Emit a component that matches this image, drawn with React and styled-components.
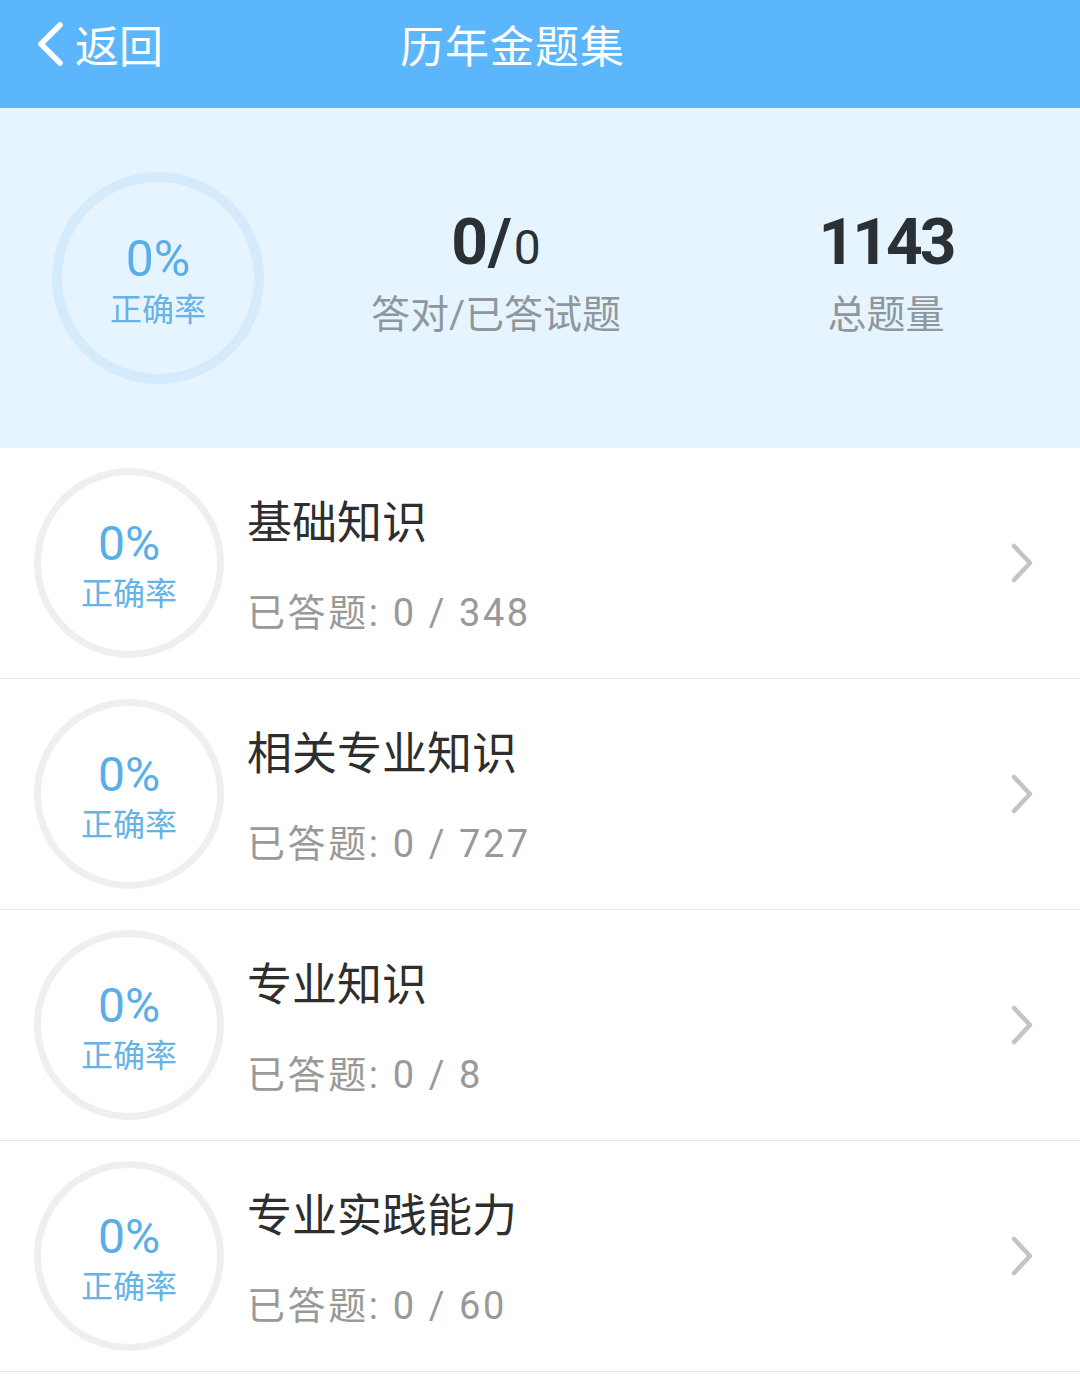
import React from 'react';
import styled, { createGlobalStyle } from 'styled-components';

const GlobalStyle = createGlobalStyle`
  body {
    margin: 0;
    background: #ffffff;
    font-family: Roboto, "Noto Sans CJK SC", sans-serif;
  }
`;

const Page = styled.div`
  width: 1080px;
  min-height: 1382px;
  background: #ffffff;
`;

const Header = styled.header`
  height: 108px;
  background: #5cb6fb;
  display: flex;
  align-items: center;
  position: relative;
  color: #ffffff;
`;

const Back = styled.div`
  display: flex;
  align-items: center;
  padding-left: 34px;
  gap: 9px;
  font-size: 44px;
  height: 100%;
  padding-bottom: 20px;
  box-sizing: border-box;
`;

const Title = styled.div`
  position: absolute;
  left: 400px;
  top: 0;
  height: 88px;
  display: flex;
  align-items: center;
  font-size: 44px;
  letter-spacing: 1px;
`;

const Summary = styled.section`
  height: 340px;
  background: #e6f4ff;
  display: flex;
  align-items: center;
  padding-left: 52px;
`;

const Ring = styled.div`
  width: ${p => p.size}px;
  height: ${p => p.size}px;
  border-radius: 50%;
  border: ${p => p.thick}px solid ${p => p.color};
  box-sizing: border-box;
  display: flex;
  flex-direction: column;
  align-items: center;
  justify-content: center;
  flex-shrink: 0;
  color: #5aaee8;
`;

const Percent = styled.div`
  font-size: ${p => p.size}px;
  line-height: 1;
  margin-top: 10px;
`;

const RateLabel = styled.div`
  font-size: ${p => p.size}px;
  line-height: 1.3;
  margin-top: 6px;
  color: #66b3e6;
`;

const Stat = styled.div`
  display: flex;
  flex-direction: column;
  align-items: center;
  width: ${p => p.w}px;
  margin-left: ${p => p.ml}px;
`;

const StatValue = styled.div`
  font-size: 64px;
  font-weight: 700;
  color: #2b3035;
  line-height: 1;
  display: flex;
  align-items: baseline;
  letter-spacing: ${p => p.ls || 0}px;
  margin-top: -6px;
`;

const Small = styled.span`
  font-size: 48px;
  font-weight: 400;
  margin-left: 2px;
`;

const StatLabel = styled.div`
  font-size: 39px;
  color: #8f979d;
  margin-top: 8px;
`;

const List = styled.div`
  display: flex;
  flex-direction: column;
`;

const Row = styled.div`
  height: 230px;
  border-bottom: 1px solid #e6e6e6;
  display: flex;
  align-items: center;
  padding-left: 34px;
  padding-right: 46px;
`;

const Info = styled.div`
  flex: 1;
  margin-left: 23px;
  display: flex;
  flex-direction: column;
`;

const Name = styled.div`
  font-size: 45px;
  color: #2e2e2e;
  line-height: 1;
  margin-top: 6px;
`;

const Count = styled.div`
  font-size: 38px;
  color: #999999;
  line-height: 1;
  margin-top: 48px;
  letter-spacing: 2.6px;
`;

const Chevron = () => (
  <svg width="24" height="42" viewBox="0 0 24 42">
    <path d="M4 4 L20 21 L4 38" fill="none" stroke="#c4c4c4" strokeWidth="4.5" strokeLinecap="round" strokeLinejoin="round" />
  </svg>
);

const BackArrow = () => (
  <svg width="32" height="46" viewBox="0 0 32 46">
    <path d="M26 4 L7 23 L26 42" fill="none" stroke="#ffffff" strokeWidth="5.5" strokeLinecap="round" strokeLinejoin="round" />
  </svg>
);

const sections = [
  { name: '基础知识', done: 0, total: 348 },
  { name: '相关专业知识', done: 0, total: 727 },
  { name: '专业知识', done: 0, total: 8 },
  { name: '专业实践能力', done: 0, total: 60 },
];

export default function App() {
  return (
    <Page>
      <GlobalStyle />
      <Header>
        <Back>
          <BackArrow />
          <span>返回</span>
        </Back>
        <Title>历年金题集</Title>
      </Header>
      <Summary>
        <Ring size={212} thick={10} color="#d5ebfb">
          <Percent size={50}>0%</Percent>
          <RateLabel size={32}>正确率</RateLabel>
        </Ring>
        <Stat w={290} ml={87}>
          <StatValue>0/<Small>0</Small></StatValue>
          <StatLabel>答对/已答试题</StatLabel>
        </Stat>
        <Stat w={290} ml={100}>
          <StatValue ls={-3}>1143</StatValue>
          <StatLabel>总题量</StatLabel>
        </Stat>
      </Summary>
      <List>
        {sections.map(s => (
          <Row key={s.name}>
            <Ring size={190} thick={7} color="#efefef">
              <Percent size={48}>0%</Percent>
              <RateLabel size={32}>正确率</RateLabel>
            </Ring>
            <Info>
              <Name>{s.name}</Name>
              <Count>已答题: {s.done} / {s.total}</Count>
            </Info>
            <Chevron />
          </Row>
        ))}
      </List>
    </Page>
  );
}
